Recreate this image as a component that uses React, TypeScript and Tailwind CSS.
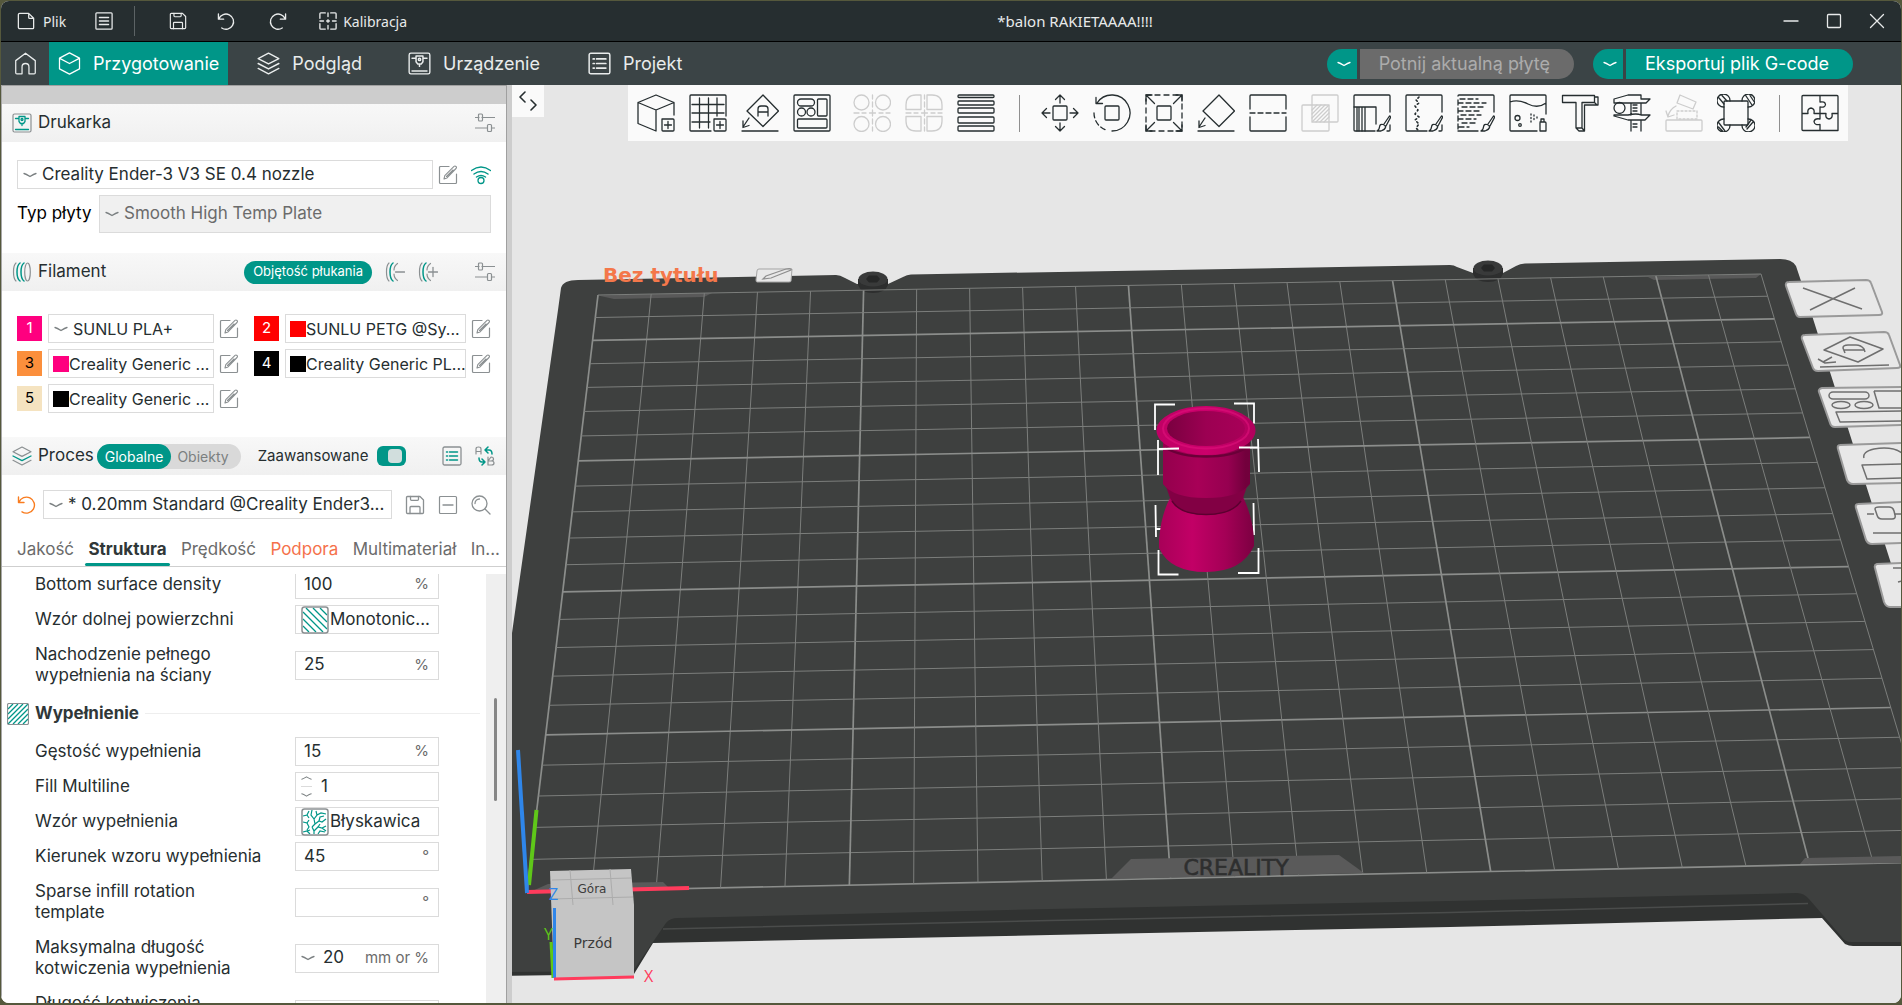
import { ReactNode } from "react";
import clsx from "clsx";

/* ---------- small icons ---------- */

function Icon({ children, className = "size-5", box = 20 }: { children: ReactNode; className?: string; box?: number }) {
  return (
    <svg
      viewBox={`0 0 ${box} ${box}`}
      className={clsx("shrink-0", className)}
      fill="none"
      stroke="currentColor"
      strokeLinecap="round"
      strokeLinejoin="round"
      aria-hidden="true"
    >
      {children}
    </svg>
  );
}

function Chevron({ className = "w-[14px] text-[#7b8082]" }: { className?: string }) {
  return (
    <svg viewBox="0 0 14 6" className={clsx("h-[6px] shrink-0", className)} fill="none" stroke="currentColor" strokeLinecap="round" aria-hidden="true">
      <path d="M1 1.5Q3 2 7 4.5Q11 2 13 1.5" strokeWidth="1.3" />
    </svg>
  );
}

const EditIcon = () => (
  <Icon className="size-5 text-[#8b9092]">
    <path d="M11 1.5H2.5a1 1 0 0 0-1 1v15a1 1 0 0 0 1 1h15a1 1 0 0 0 1-1V9" strokeWidth="1.2" />
    <path d="M6 14l.8-3.4L16 1.4q1-.8 2 .1t0 2L9 12.9z M8.5 11.5L15 5" strokeWidth="1.1" />
  </Icon>
);

const SaveIcon = ({ className = "size-5" }: { className?: string }) => (
  <Icon className={className}>
    <path d="M2.5 1.5H15l3.5 3.5v12.5a1 1 0 0 1-1 1h-15a1 1 0 0 1-1-1v-15a1 1 0 0 1 1-1z" strokeWidth="1.3" />
    <path d="M5.5 1.5v2.8q0 1 1 1h6q1 0 1-1V1.5M5 18.5v-6q0-1 1-1h8q1 0 1 1v6" strokeWidth="1.3" />
  </Icon>
);

const UndoIcon = ({ className = "size-5" }: { className?: string }) => (
  <Icon className={className}>
    <path d="M1.5 2v5.5h5.5M2 7.2A8 8 0 1 1 5 16.8" strokeWidth="1.4" />
  </Icon>
);

const PrinterIcon = ({ className = "size-5", inner }: { className?: string; inner?: string }) => (
  <Icon className={className}>
    <rect x="1" y="1" width="18" height="18" rx="1.5" strokeWidth="1.2" />
    <g className={inner} strokeWidth="1.3">
      <path d="M3.5 5.5h3M13.5 5.5h3M3.5 16.5h13M7 3.5h6v5l-1.5 2h-3L7 8.5zM10 10.5v2" />
      <circle cx="10" cy="6.5" r="1" />
    </g>
  </Icon>
);

const LayersIcon = ({ className = "size-5", inner }: { className?: string; inner?: string }) => (
  <Icon className={className}>
    <path d="M10 1l9 4.7-9 4.7-9-4.7z" strokeWidth="1.2" />
    <path d="M1 10l9 4.7 9-4.7" className={inner} strokeWidth="1.3" />
    <path d="M1 14.3l9 4.7 9-4.7" strokeWidth="1.2" />
  </Icon>
);

const TuneIcon = () => (
  <Icon className="size-5 text-[#8b9092]">
    <path d="M0 4.5h4M7 4.5h13M0 15h12.5M16.5 15H20" strokeWidth="1.2" />
    <rect x="3.5" y="1" width="4" height="7" rx="1" strokeWidth="1.2" />
    <rect x="12.5" y="11.5" width="4" height="7" rx="1" strokeWidth="1.2" />
  </Icon>
);

const SpoolIcon = ({ sign }: { sign?: "plus" | "minus" }) => (
  <Icon className="size-5 text-[#8b9092]">
    <path d="M4 1Q1.5 3 1.5 10T4 19" strokeWidth="1.2" />
    <path d="M8 1Q5 3 5 10t3 9" className="stroke-[#009688]" strokeWidth="1.5" />
    {sign ? (
      <path d="M12.5 1.5Q9 4 9 8m0 4q0 4 3.5 6.5" strokeWidth="1.2" />
    ) : (
      <>
        <path d="M12 1Q9 3 9 10t3 9" className="stroke-[#009688]" strokeWidth="1.5" />
        <ellipse cx="15.5" cy="10" rx="2.8" ry="9" strokeWidth="1.2" />
      </>
    )}
    {sign && <path d="M10.5 10H19.5" strokeWidth="1.3" />}
    {sign === "plus" && <path d="M15 5.5v9" strokeWidth="1.3" />}
  </Icon>
);

const ListIcon = ({ className = "size-5", inner }: { className?: string; inner?: string }) => (
  <Icon className={className}>
    <rect x="1" y="1" width="18" height="18" rx="1.5" strokeWidth="1.3" />
    <path d="M4.5 6h1M7.5 6h8M4.5 10h1M7.5 10h8M4.5 14h1M7.5 14h8" className={inner} strokeWidth="1.5" />
  </Icon>
);

/* ---------- title bar and main navigation ---------- */

function TitleBar() {
  return (
    <header className="flex h-[41px] shrink-0 items-center border-b border-black bg-[#262e30] pl-4 font-['Noto_Sans',sans-serif] text-[14px] text-[#e8eaea]">
      <button className="flex items-center gap-2">
        <Icon className="size-[18px]">
          <path d="M3 1.5h10L18.5 7v10.5a1 1 0 0 1-1 1H3a1.5 1.5 0 0 1-1.5-1.5V3A1.5 1.5 0 0 1 3 1.5zM13 1.5V6q0 1 1 1h4.5" strokeWidth="1.4" />
        </Icon>
        Plik
      </button>
      <button aria-label="Menu" className="ml-[29px]">
        <Icon className="size-[18px]">
          <rect x="1" y="1" width="18" height="18" rx="1" strokeWidth="1.4" />
          <path d="M5 6h10M5 10h10M5 14h10" strokeWidth="1.7" />
        </Icon>
      </button>
      <span className="ml-[21px] h-[30px] w-px bg-[#5c6365]" />
      <button aria-label="Zapisz" className="ml-[34px]">
        <SaveIcon className="size-[18px]" />
      </button>
      <button aria-label="Cofnij" className="ml-[30px]">
        <UndoIcon className="size-[19px]" />
      </button>
      <button aria-label="Ponów" className="ml-[32px]">
        <UndoIcon className="size-[19px] -scale-x-100" />
      </button>
      <button className="ml-[32px] flex items-center gap-[6px]">
        <Icon className="size-[18px]">
          <path
            d="M1 7V2a1 1 0 0 1 1-1h5M13 1h5a1 1 0 0 1 1 1v5M19 13v5a1 1 0 0 1-1 1h-5M7 19H2a1 1 0 0 1-1-1v-5M10 1v4M10 15v4M1 10h4M15 10h4M8.5 10h3M10 8.5v3"
            strokeWidth="1.5"
          />
        </Icon>
        Kalibracja
      </button>
      <h1 className="flex-1 pr-10 text-center text-[15px]">*balon RAKIETAAAA!!!!</h1>
      <div className="flex items-center gap-[27px] pr-4">
        <button aria-label="Minimalizuj">
          <Icon className="size-4" box={16}>
            <path d="M1 8h14" strokeWidth="1.4" />
          </Icon>
        </button>
        <button aria-label="Maksymalizuj">
          <Icon className="size-4" box={16}>
            <rect x="1.5" y="1.5" width="13" height="13" rx="1" strokeWidth="1.3" />
          </Icon>
        </button>
        <button aria-label="Zamknij">
          <Icon className="size-4" box={16}>
            <path d="M1.5 1.5l13 13M14.5 1.5l-13 13" strokeWidth="1.3" />
          </Icon>
        </button>
      </div>
    </header>
  );
}

function SplitButton({ label, disabled }: { label: string; disabled?: boolean }) {
  return (
    <div className="flex h-[30px] gap-[3px]">
      <button aria-label={`${label}: opcje`} className="flex w-[30px] items-center justify-center rounded-l-full bg-[#009688] pl-1 text-white">
        <Chevron className="w-[14px]" />
      </button>
      <button
        disabled={disabled}
        className={clsx("rounded-r-full pl-[19px] pr-[24px]", disabled ? "bg-[#6b6b6b] text-[#acacac]" : "bg-[#009688] text-white")}
      >
        {label}
      </button>
    </div>
  );
}

function NavBar() {
  return (
    <nav className="flex h-[43px] shrink-0 items-center bg-[#3b4446] pr-[48px] text-[18px] text-[#e9ecec]">
      <button aria-label="Start" className="flex w-[48px] justify-center">
        <Icon className="size-[23px]">
          <path d="M1.5 7.5L10 1l8.5 6.5V18a1 1 0 0 1-1 1H13v-6a3 3 0 0 0-6 0v6H2.5a1 1 0 0 1-1-1z" strokeWidth="1.1" />
        </Icon>
      </button>
      <button className="flex h-full items-center gap-[12px] bg-[#009688] px-[9px] text-white">
        <Icon className="size-[23px]">
          <path d="M10 .8l8.7 4.5v9.4L10 19.2l-8.7-4.500V5.3zM1.5 5.5L10 10l8.5-4.5" strokeWidth="1.1" />
        </Icon>
        Przygotowanie
      </button>
      <button className="ml-[29px] flex items-center gap-[12px]">
        <LayersIcon className="size-[23px]" />
        Podgląd
      </button>
      <button className="ml-[46px] flex items-center gap-[12px]">
        <PrinterIcon className="size-[23px]" />
        Urządzenie
      </button>
      <button className="ml-[48px] flex items-center gap-[12px]">
        <ListIcon className="size-[23px]" />
        Projekt
      </button>
      <div className="ml-auto flex gap-[19px]">
        <SplitButton label="Potnij aktualną płytę" disabled />
        <SplitButton label="Eksportuj plik G-code" />
      </div>
    </nav>
  );
}

/* ---------- left panel ---------- */

function Combo({
  id,
  value,
  swatch,
  disabled,
  className
}: {
  id: string;
  value: string;
  swatch?: string;
  disabled?: boolean;
  className?: string;
}) {
  return (
    <div
      className={clsx(
        "flex min-w-0 items-center border border-[#dbdbdb]",
        swatch ? "pl-1" : "gap-[5px] pl-[5px]",
        disabled ? "h-[38px] bg-[#f0f0f0] text-[#6b6b6b]" : "h-[29px] bg-white",
        className
      )}
    >
      {swatch ? <span className={clsx("size-4 shrink-0", swatch)} /> : <Chevron />}
      <select id={id} aria-label={value} disabled={disabled} className="min-w-0 flex-1 appearance-none bg-transparent opacity-100 outline-none">
        <option>{value}</option>
      </select>
    </div>
  );
}

function SectionHeader({ icon, title, children }: { icon: ReactNode; title: string; children: ReactNode }) {
  return (
    <div className="flex h-[38px] shrink-0 items-center bg-linear-to-b from-[#f8f8f8] to-[#f0f0f0] pl-[10px] pr-[11px]">
      {icon}
      <h2 className="ml-[6px] text-[17px]">{title}</h2>
      {children}
    </div>
  );
}

const filaments = [
  { n: 1, chip: "bg-[#ff007f] text-white", name: "SUNLU PLA+", swatch: "" },
  { n: 2, chip: "bg-[#ff0000] text-white", name: "SUNLU PETG @Sy...", swatch: "bg-[#ff0000]" },
  { n: 3, chip: "bg-[#fb8f3c] text-black", name: "Creality Generic ...", swatch: "bg-[#ff007f]" },
  { n: 4, chip: "bg-black text-white", name: "Creality Generic PL...", swatch: "bg-black" },
  { n: 5, chip: "bg-[#f5e3c0] text-black", name: "Creality Generic ...", swatch: "bg-black" }
];

function Filaments() {
  return (
    <div className="grid grid-cols-[222px_minmax(0,1fr)] gap-x-[15px] gap-y-[6px] px-[15px] pb-6 pt-[23px] text-[16px]">
      {filaments.map((f) => (
        <div key={f.n} className="flex min-w-0 items-center">
          <button className={clsx("mr-[6px] size-[25px] shrink-0 text-[15px]", f.chip)}>{f.n}</button>
          <Combo id={`filament-${f.n}`} value={f.name} swatch={f.swatch} className="flex-1" />
          <button aria-label={`Edytuj filament ${f.n}`} className="ml-[5px]">
            <EditIcon />
          </button>
        </div>
      ))}
    </div>
  );
}

const tabs = ["Jakość", "Struktura", "Prędkość", "Podpora", "Multimateriał", "In..."];

function Tabs() {
  return (
    <div role="tablist" className="flex h-[37px] shrink-0 justify-between border-b border-[#cfcfcf] pl-[15px] pr-[6px] text-[#6b6b6b]">
      {tabs.map((t) => (
        <button
          key={t}
          role="tab"
          aria-selected={t === "Struktura"}
          className={clsx(
            "relative pt-1",
            t === "Struktura" && "font-bold text-[#303738] after:absolute after:-inset-x-[3px] after:bottom-0 after:h-[3px] after:rounded-full after:bg-[#009688]",
            t === "Podpora" && "text-[#f5714b]"
          )}
        >
          {t}
        </button>
      ))}
    </div>
  );
}

function MonotonicIcon() {
  return (
    <svg viewBox="0 0 28 28" className="size-7 shrink-0" fill="none" aria-hidden="true">
      <path d="M2 20l6 6M2 13l13 13M2 6l20 20M5 2l21 21M12 2l14 14M19 2l7 7" stroke="#009688" strokeWidth="1.3" />
      <rect x="1" y="1" width="26" height="26" rx="2.5" stroke="#8b9092" strokeWidth="1.5" />
    </svg>
  );
}

function LightningIcon() {
  return (
    <svg viewBox="0 0 28 28" className="size-7 shrink-0" fill="none" aria-hidden="true">
      <path
        d="M2 8l4-1 2-4M6 7l2 3M11 2l-1 5 3 4 1 5-3 3M13 11l3-4-1-4M16 7l4-2 5 1M14 16l4-3 3 1 4-3M18 13l1-4 4-1M2 14l4 1 2 4-2 3M6 15l2-3M11 19l2 4 0 3M13 23l4-4 4 1 4-2M17 19l2-3M17 26l2-3 5 1M2 24l4-1 3 3M21 20l4 3M9 22l-3 1"
        stroke="#009688"
        strokeWidth="1.2"
      />
      <rect x="1" y="1" width="26" height="26" rx="2.5" stroke="#8b9092" strokeWidth="1.5" />
    </svg>
  );
}

type Setting = {
  id: string;
  label: string;
  value: string;
  unit?: string;
  kind?: "select" | "spin" | "combo";
  icon?: ReactNode;
  tall?: boolean;
};

function SettingRow({ id, label, value, unit, kind, icon, tall }: Setting) {
  return (
    <div className={clsx("flex shrink-0 items-center pl-[33px]", tall ? "h-[56px]" : "h-[35px]")}>
      <label htmlFor={id} className="mr-[28px] w-[232px] leading-[21px]">
        {label}
      </label>
      <div className="flex h-[29px] w-[144px] items-center border border-[#dbdbdb] bg-white">
        {kind === "select" && (
          <>
            <span className="ml-[5px] flex">{icon}</span>
            <select id={id} className="ml-px min-w-0 flex-1 appearance-none bg-transparent outline-none">
              <option>{value}</option>
            </select>
          </>
        )}
        {kind === "spin" && (
          <span className="ml-[3px] flex w-[14px] flex-col items-center divide-y divide-[#dbdbdb] text-[#7b8082]">
            <button aria-label="Więcej" className="pb-[5px]">
              <Chevron className="w-[11px] rotate-180" />
            </button>
            <button aria-label="Mniej" className="pt-[5px]">
              <Chevron className="w-[11px]" />
            </button>
          </span>
        )}
        {kind === "combo" && (
          <button aria-label="Rozwiń" className="ml-[5px]">
            <Chevron />
          </button>
        )}
        {kind !== "select" && (
          <>
            <input id={id} defaultValue={value} className="min-w-0 flex-1 bg-transparent pl-2 outline-none" />
            {unit && <span className="pr-[9px] text-[15px] text-[#6b6b6b]">{unit}</span>}
          </>
        )}
      </div>
    </div>
  );
}

const shell: Setting[] = [
  { id: "bottom-density", label: "Bottom surface density", value: "100", unit: "%" },
  { id: "bottom-pattern", label: "Wzór dolnej powierzchni", value: "Monotonic...", kind: "select", icon: <MonotonicIcon /> },
  { id: "overlap", label: "Nachodzenie pełnego wypełnienia na ściany", value: "25", unit: "%", tall: true }
];

const infill: Setting[] = [
  { id: "density", label: "Gęstość wypełnienia", value: "15", unit: "%" },
  { id: "multiline", label: "Fill Multiline", value: "1", kind: "spin" },
  { id: "pattern", label: "Wzór wypełnienia", value: "Błyskawica", kind: "select", icon: <LightningIcon /> },
  { id: "direction", label: "Kierunek wzoru wypełnienia", value: "45", unit: "°" },
  { id: "rotation", label: "Sparse infill rotation template", value: "", unit: "°", tall: true },
  { id: "anchor-max", label: "Maksymalna długość kotwiczenia wypełnienia", value: "20", unit: "mm or %", kind: "combo", tall: true },
  { id: "anchor", label: "Długość kotwiczenia wypełnienia", value: "", kind: "combo", tall: true }
];

function SidePanel() {
  return (
    <aside className="flex w-[511px] shrink-0 flex-col border-l border-r-[5px] border-l-[#a8a8a8] border-r-[#cdcdcd] bg-white text-[17px] text-[#262e30]">
      <div className="flex min-h-0 flex-1 flex-col border-r border-t border-[#a0a0a0]">
        <div className="h-[18px] shrink-0 bg-[#cdcdcd]" />
        <SectionHeader icon={<PrinterIcon className="size-5 text-[#8b9092]" inner="stroke-[#009688]" />} title="Drukarka">
          <button aria-label="Ustawienia drukarki" className="ml-auto">
            <TuneIcon />
          </button>
        </SectionHeader>

        <div className="flex flex-col gap-[6px] px-[15px] pb-5 pt-[18px]">
          <div className="flex items-center">
            <Combo id="printer" value="Creality Ender-3 V3 SE 0.4 nozzle" className="flex-1" />
            <button aria-label="Edytuj drukarkę" className="ml-[5px]">
              <EditIcon />
            </button>
            <button aria-label="Sieć" className="ml-[13px] text-[#009688]">
              <Icon>
                <circle cx="10" cy="15.5" r="3" strokeWidth="1.3" />
                <path d="M.5 5.5q9.5-7 19 0M3 9q7-5 14 0M5.5 12Q10 9 14.5 12" strokeWidth="1.4" />
              </Icon>
            </button>
          </div>
          <div className="flex items-center text-black">
            <label htmlFor="plate" className="w-[82px]">
              Typ płyty
            </label>
            <Combo id="plate" value="Smooth High Temp Plate" disabled className="flex-1" />
          </div>
        </div>

        <SectionHeader icon={<SpoolIcon />} title="Filament">
          <button className="ml-auto h-[23px] rounded-full bg-[#009688] px-[9px] text-[13px] text-white">Objętość płukania</button>
          <button aria-label="Usuń filament" className="ml-[13px]">
            <SpoolIcon sign="minus" />
          </button>
          <button aria-label="Dodaj filament" className="ml-[13px]">
            <SpoolIcon sign="plus" />
          </button>
          <button aria-label="Ustawienia filamentu" className="ml-[37px]">
            <TuneIcon />
          </button>
        </SectionHeader>

        <Filaments />

        <SectionHeader icon={<LayersIcon className="size-5 text-[#8b9092]" inner="stroke-[#009688]" />} title="Proces">
          <div className="ml-[3px] flex h-[25px] rounded-full bg-[#d9d9d9] text-[14px] text-[#7b7f80]">
            <button className="rounded-full bg-[#009688] px-[8px] text-white">Globalne</button>
            <button className="pl-[6px] pr-[12px]">Obiekty</button>
          </div>
          <label htmlFor="advanced" className="ml-[17px] text-[15px]">
            Zaawansowane
          </label>
          <input
            id="advanced"
            type="checkbox"
            defaultChecked
            className="ml-[9px] h-5 w-[29px] shrink-0 appearance-none rounded-md bg-[#009688] pl-[11px] pt-[3px] before:block before:size-[14px] before:rounded before:bg-[#d1dedd]"
          />
          <button aria-label="Lista ustawień" className="ml-auto">
            <ListIcon className="size-5 text-[#8b9092]" inner="stroke-[#009688]" />
          </button>
          <button aria-label="Porównaj" className="ml-[13px]">
            <Icon className="size-5 text-[#8b9092]">
              <path d="M1 8V3q0-2 2.5-2T6 3v5M1 5.5h5M13 11v8h3.500q2.5 0 2.5-2t-2.5-2H13M13 15h3q2.500 0 2.5-2T16 11z" strokeWidth="1.2" />
              <path d="M13 1l-3 3 3 3M10 4h4q3 0 3 4M7 19l3-3-3-3M10 16H7q-3 0-3-4" className="stroke-[#009688]" strokeWidth="1.5" />
            </Icon>
          </button>
        </SectionHeader>

        <div className="flex items-center px-[15px] pb-[11px] pt-[15px] text-[#8b9092]">
          <button aria-label="Przywróć" className="mr-[6px] text-[#f97c1f]">
            <UndoIcon />
          </button>
          <Combo id="preset" value="* 0.20mm Standard @Creality Ender3..." className="flex-1 text-[#262e30]" />
          <button aria-label="Zapisz profil" className="ml-[13px]">
            <SaveIcon />
          </button>
          <button aria-label="Usuń profil" className="ml-[13px]">
            <Icon>
              <rect x="1.5" y="1.5" width="17" height="17" rx="1" strokeWidth="1.2" />
              <path d="M5 10h10" strokeWidth="1.3" />
            </Icon>
          </button>
          <button aria-label="Szukaj" className="ml-[13px]">
            <Icon>
              <circle cx="8.5" cy="8.5" r="7.5" strokeWidth="1.3" />
              <path d="M14 14l5 5M4 8.5A4.5 4.5 0 0 1 8.5 4" strokeWidth="1.3" />
            </Icon>
          </button>
        </div>

        <Tabs />

        <div className="mt-[7px] flex min-h-0 flex-1">
          <div className="flex h-0 min-h-full flex-1 flex-col overflow-hidden">
            <div className="-mt-[7px] flex flex-col">
              {shell.map((s) => (
                <SettingRow key={s.id} {...s} />
              ))}
              <div className="flex h-[41px] shrink-0 items-center pl-[5px] pr-1.5">
                <svg viewBox="0 0 22 22" className="size-[22px] shrink-0" fill="none" aria-hidden="true">
                  <path d="M1 6l5-5M1 11L11 1M1 16L16 1M1 21L21 1M6 21L21 6M11 21l10-10M16 21l5-5" stroke="#009688" strokeWidth="1.3" />
                  <rect x=".5" y=".5" width="21" height="21" rx="1.5" stroke="#8b9092" strokeWidth="1.2" />
                </svg>
                <h3 className="ml-[6px] font-bold text-[#303738]">Wypełnienie</h3>
                <span className="ml-[6px] h-px flex-1 bg-[#eeeeee]" />
              </div>
              {infill.map((s) => (
                <SettingRow key={s.id} {...s} />
              ))}
            </div>
          </div>
          <div className="w-[20px] bg-[#efefef] pl-2">
            <div className="mt-[124px] h-[103px] w-[3px] rounded-full bg-[#868686]" />
          </div>
        </div>
      </div>
    </aside>
  );
}

/* ---------- viewport toolbar ---------- */

const brush = <path d="M24 37q2-.5 2.5-4t3.5-2.5 2.5 3T28 37zM31 30l5.5-8q1 0 1 1.5L33 32" />;
const frameWithBrush = "M22 37H2a1 1 0 0 1-1-1V2a1 1 0 0 1 1-1h34a1 1 0 0 1 1 1v16M37 31v5a1 1 0 0 1-1 1h-2";
const addBadge = <path d="M25 25h11a1 1 0 0 1 1 1v10a1 1 0 0 1-1 1H26a1 1 0 0 1-1-1zM31 27.5v7M27.5 31h7" />;

type Tool = { name: string; draw: ReactNode; off?: boolean };

const tools: Tool[] = [
  { name: "Dodaj", draw: <><path d="M37 21V8.5L19 1 1 8.5v21L19 37V16M1 8.5L19 16l18-7.5" />{addBadge}</> },
  { name: "Dodaj płytę", draw: <><path d="M22 37H2a1 1 0 0 1-1-1V2a1 1 0 0 1 1-1h34a1 1 0 0 1 1 1v20M10.5 4v30M19.5 4v30M28 4v18M3 10.5h32M3 19h32M3 28h18" />{addBadge}</> },
  { name: "Orientuj", draw: <path d="M22 1l15.500 16L22 32.5 6 17zM17 22v-7q0-3 3-3h4q3 0 3 3v7M17 18h10M1 37h36M8 24L2 33M2 27v6.5l6-2" /> },
  {
    name: "Rozmieść",
    draw: (
      <>
        <rect x="1" y="1" width="36" height="36" rx="1" />
        <rect x="4.5" y="5" width="17" height="7" rx="3.5" />
        <rect x="24.5" y="5" width="9.5" height="17" rx="1" />
        <circle cx="8.5" cy="18" r="4" />
        <circle cx="18" cy="18" r="4" />
        <rect x="4.5" y="25" width="29.5" height="9" rx="1" />
      </>
    )
  },
  {
    name: "Podziel na obiekty",
    off: true,
    draw: (
      <>
        <circle cx="8.5" cy="8.5" r="7.5" />
        <circle cx="30" cy="8.5" r="7.5" />
        <circle cx="8.5" cy="30" r="7.5" />
        <circle cx="30" cy="30" r="7.5" />
        <path d="M19.5 1v4M19.5 8v5M19.5 16v6M19.5 25v5M19.5 33v4M1 19h5M9 19h4M16.5 19h6M26 19h4M33 19h4" />
      </>
    )
  },
  {
    name: "Podziel na części",
    off: true,
    draw: (
      <path d="M1 15.5V11Q1 1 11 1h5v14.5zM22 1h5q10 0 10 10v4.5H22zM1 22.5h15V37h-5Q1 37 1 27zM22 22.5h15V27q0 10-10 10h-5zM19.5 1v4M19.5 8v5M19.5 16v6M19.5 25v5M19.5 33v4M1 19h5M9 19h4M16.5 19h6M26 19h4M33 19h4" />
    )
  },
  {
    name: "Zmienna wysokość warstwy",
    draw: (
      <>
        <rect x="1" y="1" width="36" height="2.5" rx="1" />
        <rect x="1" y="7" width="36" height="4" rx="1" />
        <rect x="1" y="14" width="36" height="5" rx="1" />
        <rect x="1" y="23" width="36" height="6" rx="1" />
        <rect x="1" y="32" width="36" height="5" rx="1" />
      </>
    )
  }
];

const gizmos: Tool[] = [
  { name: "Przesuń", draw: <><rect x="12" y="12" width="14" height="14" rx="1" /><path d="M19 9V1M14.500 5.5L19 1l4.5 4.5M19 29v8M14.5 32.5L19 37l4.5-4.5M9 19H1M5.5 14.5L1 19l4.5 4.5M29 19h8M32.5 14.5L37 19l-4.5 4.5" /></> },
  { name: "Obróć", draw: <><rect x="12" y="12" width="14" height="14" rx="1" /><path d="M19 37A18 18 0 1 0 4 9M3 3.5V9.5h6.5" /><path d="M1 19A18 18 0 0 0 14 36.3" strokeDasharray="5 3" /></> },
  { name: "Skaluj", draw: <><rect x="12" y="12" width="14" height="14" rx="1" /><rect x="1" y="1" width="36" height="36" strokeDasharray="5 4" /><path d="M1 7V1h6M1 1l8.5 8.5M31 1h6v6M37 1l-8.5 8.5M1 31v6h6M1 37l8.5-8.5M37 31v6h-6M37 37l-8.5-8.5" /></> },
  { name: "Połóż na powierzchni", draw: <path d="M22 1l15.5 16L22 32.5 6 17zM1 37h36M8 24L2 33M2 27v6.5l6-2" /> },
  { name: "Przetnij", draw: <path d="M1 15V2a1 1 0 0 1 1-1h34a1 1 0 0 1 1 1v13M1 23v13a1 1 0 0 0 1 1h34a1 1 0 0 0 1-1V23M1 19h5M9 19h5M17 19h5M25 19h5M33 19h4" /> },
  { name: "Operacje na siatce", off: true, draw: <><rect x="1" y="11" width="27" height="26" rx="1" /><rect x="11" y="1" width="26" height="27" rx="1" /><path d="M11 16l5-5M11 20l9-9M11 24l13-13M11 28l17-17M15 28l13-13M19 28l9-9M23 28l5-5" /></> },
  { name: "Malowanie podpór", draw: <><path d={frameWithBrush} /><path d="M1 13h22v17M4 13v24M6 13v24M9 13v24M12 13v24" />{brush}</> },
  { name: "Malowanie szwu", draw: <><path d={frameWithBrush} /><path d="M14 3l-3 3 3 3-4 3 3 4-3 4 4 3-4 3 4 4-3 4 3 3" strokeDasharray="1.500 3" strokeWidth="1.6" />{brush}</> },
  { name: "Malowanie fuzzy", draw: <><path d="M37 18V2a1 1 0 0 0-1-1H2a1 1 0 0 0-1 1M1 37h20" /><path d="M3 5h18M1 9h28M5 13h24M1 17h24M4 21h20M1 25h18M5 29h14M2 33h10M1 6v30" strokeDasharray="5 3" />{brush}</> },
  { name: "Malowanie kolorem", draw: <><path d="M28 37H2a1 1 0 0 1-1-1V2a1 1 0 0 1 1-1h34a1 1 0 0 1 1 1v18M1 8q8-3 18 2t18-1M31 28h5a1 1 0 0 1 1 1v8h-6v-8M32 28v-3h3v3" /><circle cx="8.5" cy="24" r="2.5" /><circle cx="11" cy="31" r="1.3" /><path d="M22 20v9M25 21v6M28 23v2" strokeDasharray="1 2.5" /></> },
  { name: "Tekst", draw: <path d="M1.500 1.500h32v7H21V34h-6V8.500H1.500zM34 3h3v8H23.500v26H18l-3-3M33.500 8.500L36 11M21 34l2.500 3" /> },
  { name: "Pomiar", draw: <><circle cx="6.5" cy="14" r="5.5" /><path d="M1 5l14-4h13v4h9l-4 4H1zM1 21h14q9-2 13 0h9l-5 5H15L1 22zM18 9v12M28 9v12M18 27v10M28 27v10M20 11h4M20 14h4M20 17h4M20 30h4M20 33h4" /></> },
  { name: "Montaż", off: true, draw: <><rect x="1" y="26" width="36" height="11" rx="1" /><path d="M15 1l16 7-3 7-16-6z" /><path d="M12 17h20v8H12z" strokeDasharray="2 2" /><path d="M11 12q-6 3-8 10M1 17l2 6 6-2" /></> },
  { name: "Uszka brim", draw: <><rect x="7" y="7" width="24" height="24" rx="1" /><path d="M7 13A6.5 6.5 0 1 1 13 7M25 7a6.5 6.5 0 1 1 6 6M31 25a6.5 6.5 0 1 1-6 6M13 31a6.5 6.5 0 1 1-6-6M2 4l5 6M5 1.5l5 5.5M29 2l6 9M33 1.5l4 6M2 29l6 8M1.5 33l4 4M36 28l-6 7M34 26l-5 7" /></> }
];

const assembly: Tool = {
  name: "Widok montażu",
  draw: <path d="M2 1.5h34a1 1 0 0 1 1 1v34H2a1 1 0 0 1-1-1v-33a1 1 0 0 1 1-1zM1 19.5h6q-1-5 3-5.5 4 .5 3 5.5h12q-1 5 3 5.5 4-.5 3-5.5h6M19 1.5V8q5-1 5.5 2.5-.5 3.5-5.5 2.5v12q-5-1-6 2.5.5 4 6 3v6" />
};

function ToolButton({ name, draw, off }: Tool) {
  return (
    <button aria-label={name} disabled={off} className={off ? "text-[#cdcdcd]" : "text-[#262e30]"}>
      <Icon className="size-[38px]" box={38}>
        <g strokeWidth="1.3">{draw}</g>
      </Icon>
    </button>
  );
}

function Toolbar() {
  return (
    <div className="ml-[84px] flex h-[56px] items-center gap-[14px] bg-[#fafafa] px-[9px]">
      {tools.map((t, i) => (
        <div key={t.name} className={clsx("flex", i === 4 && "ml-2")}>
          <ToolButton {...t} />
        </div>
      ))}
      <span className="ml-[10px] mr-[7px] h-[37px] w-px bg-[#8f8f8f]" />
      {gizmos.map((t) => (
        <ToolButton key={t.name} {...t} />
      ))}
      <span className="ml-[10px] mr-[7px] h-[37px] w-px bg-[#8f8f8f]" />
      <ToolButton {...assembly} />
    </div>
  );
}

/* ---------- 3D scene ---------- */

const CELLS = 22;
const corners = { tl: [598, 295], tr: [1761, 274], br: [1937, 862], bl: [527, 892] };

// Unit square -> plate quad, u to the right, v towards the front edge.
function makeProjection() {
  const [x0, y0] = corners.tl;
  const [x1, y1] = corners.tr;
  const [x2, y2] = corners.br;
  const [x3, y3] = corners.bl;
  const dx1 = x1 - x2;
  const dx2 = x3 - x2;
  const dx3 = x0 - x1 + x2 - x3;
  const dy1 = y1 - y2;
  const dy2 = y3 - y2;
  const dy3 = y0 - y1 + y2 - y3;
  const det = dx1 * dy2 - dx2 * dy1;
  const g = (dx3 * dy2 - dx2 * dy3) / det;
  const h = (dx1 * dy3 - dx3 * dy1) / det;
  return (u: number, v: number) => {
    const w = g * u + h * v + 1;
    return [
      ((x1 - x0 + g * x1) * u + (x3 - x0 + h * x3) * v + x0) / w,
      ((y1 - y0 + g * y1) * u + (y3 - y0 + h * y3) * v + y0) / w
    ];
  };
}

const project = makeProjection();

function Grid() {
  const lines = [];
  for (let i = 0; i <= CELLS; i++) {
    const t = i / CELLS;
    const [ax, ay] = project(t, 0);
    const [bx, by] = project(t, 1);
    const [cx, cy] = project(0, 1 - t);
    const [dx, dy] = project(1, 1 - t);
    const major = i % 5 === 0;
    lines.push(
      <g key={i} stroke={major ? "#8b8d8b" : "#7c7e7c"} strokeWidth={major ? 1.7 : 1}>
        <line x1={ax} y1={ay} x2={bx} y2={by} />
        <line x1={cx} y1={cy} x2={dx} y2={dy} />
      </g>
    );
  }
  return <g>{lines}</g>;
}

function Screw({ x, y }: { x: number; y: number }) {
  return (
    <g transform={`translate(${x} ${y})`}>
      <path d="M-15 0v6q3 8 15 8t15-8V0z" fill="#2d2e2e" />
      <ellipse rx="14.5" ry="7.5" fill="#393a3a" />
      <path d="M-7 0l3-3.5h8L7 0 4 3.5h-8z" fill="#262727" />
    </g>
  );
}

function PlateButtons() {
  return (
    <g strokeLinejoin="round">
      <g fill="#e8e8e8" stroke="#9a9a9a" strokeWidth="2">
        <path d="M1789 282l77-2q4 0 5 3l11 29q1 3-3 3l-79 2q-3 0-4-3l-10-28q-1-4 3-4z" />
        <path d="M1805 335l79-3q4 0 5 3l11 30q1 3-3 3l-79 3q-4 0-5-3l-11-29q-1-4 3-4z" />
        <path d="M1902 387l-80 1q-4 1-3 4l11 31q1 4 5 4l67-2z" />
        <path d="M1902 443l-62 2q-3 0-2 4l9 31q2 4 6 4l49-1z" />
        <path d="M1902 502l-44 2q-3 0-2 4l10 32q2 4 6 4l30-1z" />
        <path d="M1902 563l-25 1q-3 1-2 4l9 34q2 5 6 5h12z" />
      </g>
      <g fill="none" stroke="#6f6f6f" strokeWidth="1.5">
        <path d="M1803 288l59 21M1855 288l-45 22" />
        <path d="M1824 350l26-13 33 12-25 13zM1845 353l-2-5q0-3 5-3h8q5 0 8 4l1 3M1844 350h20M1832 357l-9 5M1818 359l7 4 11-1M1820 367l69-2" />
        <rect x="1829" y="392" width="40" height="7" rx="4" />
        <ellipse cx="1841" cy="405" rx="9" ry="3.5" />
        <ellipse cx="1864" cy="405" rx="9" ry="3.5" />
        <path d="M1874 391h28M1874 391l5 17h23M1902 411l-66 1 4 10 62-1" />
        <path d="M1864 458q-2-6 10-9 18-3 28 4M1902 464l-40 1 5 14 35-1" />
        <path d="M1867 514h7M1894 514h8M1875 509q0-2 4-2h10q4 0 5 4l1 4q1 4-3 4h-10q-4 0-5-4zM1873 533h29" />
        <path d="M1893 568h9M1898 582l4-1" />
      </g>
    </g>
  );
}

function Model() {
  return (
    <g>
      <g fill="none" stroke="#ffffff" strokeWidth="1.8">
        <path d="M1155 430v-25.5h20M1234 403.5h20v20M1155.5 505l.5 32M1156 529h6M1253.5 503l.5 32" />
      </g>
      <path d="M1170 498Q1161 515 1159 540v8Q1170 572 1206 572t48-26v-8Q1252 515 1243 497z" fill="url(#cupLow)" />
      <path d="M1163 478l7 20Q1178 515 1206 515t37-17l7-20z" fill="#820044" />
      <path d="M1172 501q8 13.5 34 13.5t35-13.5" fill="none" stroke="#5c0030" strokeWidth="1.5" />
      <path d="M1163 436v48q10 14 43 14t44-14v-48z" fill="url(#cupBody)" />
      <path d="M1166 448q14 8.5 40 8.5t40-8.5" fill="none" stroke="#6a0038" strokeWidth="2.5" />
      <ellipse cx="1206" cy="430.5" rx="49.5" ry="24.5" fill="url(#cupRim)" />
      <ellipse cx="1206" cy="428.5" rx="43" ry="20" fill="none" stroke="#e0107c" strokeWidth="2" opacity=".6" />
      <ellipse cx="1206" cy="428.5" rx="39" ry="17.5" fill="url(#cupHole)" />
      <g fill="none" stroke="#ffffff" strokeWidth="1.8">
        <path d="M1158 440v35M1158 449l21-.5M1239 447.5h20M1258 439l1 33M1158.5 550v24.5h20M1238 573h20.5v-25" />
      </g>
    </g>
  );
}

function ViewCube() {
  return (
    <g>
      <path d="M550 871l81-2 3 36v72l-80 2z" fill="#c5c5c5" />
      <path d="M552 880l79-2M551 899l82-2M570 870l3 35M610 869l3 36" stroke="#acacac" fill="none" />
      <g fontFamily="'DejaVu Sans', sans-serif" fill="#3c3c3c" textAnchor="middle">
        <text x="592" y="893" fontSize="12">Góra</text>
        <text x="593" y="948" fontSize="14">Przód</text>
      </g>
      <path d="M551 942l2 36" stroke="#5fc719" strokeWidth="3" />
      <path d="M554.5 908v70" stroke="#2f86ea" strokeWidth="3" />
      <path d="M554 979l80-2" stroke="#ff3b5c" strokeWidth="3" />
      <g fontFamily="'Open Sans', sans-serif" fontSize="16">
        <text x="549" y="900" fill="#2f86ea">Z</text>
        <text x="544" y="940" fill="#5fc719">Y</text>
        <text x="644" y="982" fill="#ff3b5c">X</text>
      </g>
    </g>
  );
}

function Scene() {
  return (
    <svg viewBox="512 85 1389 918" preserveAspectRatio="xMinYMin slice" className="absolute inset-0 size-full" role="img" aria-label="Podgląd 3D płyty">
      <defs>
        <linearGradient id="cupBody">
          <stop offset="0" stopColor="#94004d" />
          <stop offset=".4" stopColor="#a80057" />
          <stop offset=".75" stopColor="#960050" />
          <stop offset=".95" stopColor="#72003c" />
        </linearGradient>
        <linearGradient id="cupLow">
          <stop offset="0" stopColor="#a80058" />
          <stop offset=".35" stopColor="#c20066" />
          <stop offset=".7" stopColor="#a40056" />
          <stop offset="1" stopColor="#7c0041" />
        </linearGradient>
        <linearGradient id="cupRim">
          <stop offset="0" stopColor="#c00065" />
          <stop offset=".5" stopColor="#cb006b" />
          <stop offset="1" stopColor="#b0005c" />
        </linearGradient>
        <linearGradient id="cupHole">
          <stop offset="0" stopColor="#7a0040" />
          <stop offset=".5" stopColor="#9c0052" />
          <stop offset="1" stopColor="#a80058" />
        </linearGradient>
      </defs>

      {/* side face, then the top of the bed */}
      <path d="M500 700v276l134-2 19-31 397-8 400-8 372-9 23 26q4 2 8 2h60V700z" fill="#303231" />
      <path
        d="M558 310l3-22q2-8 17-8l258-5q4 0 9 3l12 6h31l15-7q4-2.5 8-2.5l539-9.5q4 0 7 2l16 6h30l13-7q4-2.5 9-2.5l255-4.5q12 0 16 7l5 15 101 317v344h-51q-6 0-10-6l-32-37q-5-6-12-6l-347 8-400 8-372 9q-8 0-12 5l-33 48-122 1V640z"
        fill="#3e403f"
      />
      <path d="M663 929l387-8.5 400-8 358-9" stroke="#4a4c4b" strokeWidth="1.5" fill="none" />
      <Screw x={873} y={279} />
      <Screw x={1488} y={268} />

      <path d="M598 295.5l114-2.5-8 4-90 2z" fill="#595959" />
      <path d="M1648 277l113-3-5 4-102 2z" fill="#595959" />
      <Grid />
      <path d="M1111 879l20-20 208-4 25 18z" fill="#5a5a5a" />
      <path d="M530 892l18-8 115-2 7 7z" fill="#5a5a5a" />
      <path d="M1800 864l5-6 97-2v7z" fill="#5a5a5a" />
      <text x="1236" y="875" fontSize="22" textAnchor="middle" fontFamily="'DejaVu Sans', sans-serif" fill="#2e2f2f" stroke="#2e2f2f" strokeWidth=".6">
        CREALITY
      </text>

      <text x="603" y="282" fontSize="20" fontWeight="700" fontFamily="'DejaVu Sans', sans-serif" fill="#f4774a">
        Bez tytułu
      </text>
      <path d="M759 269h33l-1 12q0 1-2 1h-32q-1 0-1-2l1-9q0-2 2-2z" fill="#e8e8e8" stroke="#a5a5a5" />
      <path d="M763 279l3-3 20-7q6-1 5 1l-20 8z" fill="none" stroke="#8e8e8e" strokeWidth="1.2" />

      <PlateButtons />
      <Model />

      <path d="M527 892l162-4" stroke="#ff3b5c" strokeWidth="4" />
      <path d="M536.5 810L529 885" stroke="#5fc719" strokeWidth="4" />
      <path d="M518 750l9 143" stroke="#2f86ea" strokeWidth="4" />
      <ViewCube />
    </svg>
  );
}

export default function App() {
  return (
    <div className="h-screen bg-[#55583c] px-px pb-[2px] pt-px font-['Inter','Liberation_Sans',sans-serif]">
      <div className="flex h-full flex-col overflow-hidden rounded-lg bg-white">
        <TitleBar />
        <NavBar />
        <div className="flex min-h-0 flex-1">
          <SidePanel />
          <main className="relative min-w-0 flex-1 overflow-hidden bg-[#e6e6e6]">
            <Scene />
            <div className="relative flex items-start">
              <button aria-label="Zwiń panel" className="flex size-8 shrink-0 items-center justify-center bg-[#fafafa] text-[#262e30]">
                <Icon>
                  <path d="M7 1L2 6l5 5M13 9l5 5-5 5" strokeWidth="1.6" />
                </Icon>
              </button>
              <Toolbar />
            </div>
          </main>
        </div>
      </div>
    </div>
  );
}
